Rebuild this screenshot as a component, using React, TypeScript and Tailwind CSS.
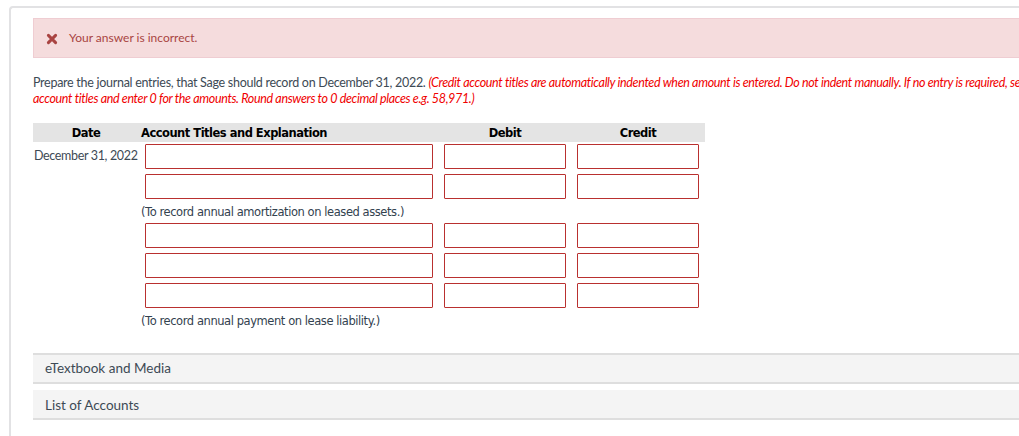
import React from "react";

const lato = "font-['Lato','Liberation_Sans',sans-serif]";
const dejavu = "font-['DejaVu_Sans','Liberation_Sans',sans-serif]";

function Field({ width }: { width: string }) {
  return <input aria-label="entry" className={`${width} h-[25px] rounded-[1px] border border-[#b9302f] bg-white`} />;
}

function Row({ date }: { date?: string }) {
  return (
    <div className="flex h-[25px] items-center">
      <div className="w-[112px] whitespace-nowrap pl-[1px] text-[12.5px] tracking-[-0.34px] text-[#3d4a55]">{date}</div>
      <Field width="w-[288px]" />
      <div className="w-[11px]" />
      <Field width="w-[122px]" />
      <div className="w-[11px]" />
      <Field width="w-[122px]" />
    </div>
  );
}

function Note({ children }: { children: React.ReactNode }) {
  return <div className={`${dejavu} pl-[108px] text-[11.5px] leading-[14px] tracking-[-0.43px] text-[#33424f]`}>{children}</div>;
}

function Bar({ label, h, mb, pad }: { label: string; h: string; mb: string; pad: string }) {
  return (
    <div className={`${h} ${mb} ${pad} flex items-center border-b-2 border-[#dedede] bg-[#f4f4f4] pl-[12px] text-[13.5px] text-[#3d4a55]`}>
      {label}
    </div>
  );
}

export default function App() {
  return (
    <div className={`${lato} h-[436px] w-[1019px] overflow-hidden bg-white`}>
      <div className="ml-[9px] mt-[6px] h-[500px] w-[1200px] rounded-tl-[4px] border-l-2 border-t-2 border-[#e2e2e4] pl-[22px] pt-[10px]">
        <div className="flex h-[40px] items-center border border-[#efcdd2] bg-[#f5dcdd] pl-[12px] text-[12px] text-[#a94442]">
          <svg width="12" height="12" viewBox="0 0 12 12" className="mr-[11px] mt-[1px]">
            <path d="M2.4 2.4 L9.6 9.6 M9.6 2.4 L2.4 9.6" stroke="#a94442" strokeWidth="3" strokeLinecap="round" />
          </svg>
          <span>Your answer is incorrect.</span>
        </div>

        <div className="mt-[17px] whitespace-nowrap text-[12.5px] leading-[16px] tracking-[-0.28px] text-[#3d4a55]">
          <div>
            Prepare the journal entries, that Sage should record on December 31, 2022.{" "}
            <em className="tracking-[-0.35px] text-[#f00000]">
              (Credit account titles are automatically indented when amount is entered. Do not indent manually. If no entry is required, select "No Entry" for the
            </em>
          </div>
          <em className="block tracking-[-0.35px] text-[#f00000]">account titles and enter 0 for the amounts. Round answers to 0 decimal places e.g. 58,971.)</em>
        </div>

        <div className="mt-[16px] w-[672px]">
          <div className={`${dejavu} flex h-[19px] items-center bg-[#e4e4e4] pt-[2px] text-[11.5px] font-bold tracking-[-0.5px] text-black`}>
            <div className="w-[108px] pr-[2px] text-center">Date</div>
            <div className="w-[303px]">Account Titles and Explanation</div>
            <div className="w-[122px] text-center">Debit</div>
            <div className="w-[11px]" />
            <div className="w-[122px] text-center">Credit</div>
          </div>
          <div className="mt-[2px] flex flex-col">
            <Row date="December 31, 2022" />
            <div className="h-[5px]" />
            <Row />
            <div className="mt-[6px] h-[18px]">
              <Note>(To record annual amortization on leased assets.)</Note>
            </div>
            <Row />
            <div className="h-[5px]" />
            <Row />
            <div className="h-[5px]" />
            <Row />
            <div className="mt-[6px] h-[14px]">
              <Note>(To record annual payment on lease liability.)</Note>
            </div>
          </div>
        </div>

        <div className="mt-[25px] border-t-2 border-[#dedede]">
          <Bar label="eTextbook and Media" h="h-[29px]" mb="mb-[6px]" pad="pt-0" />
          <Bar label="List of Accounts" h="h-[30px]" mb="mb-0" pad="pt-[2px]" />
        </div>
      </div>
    </div>
  );
}
